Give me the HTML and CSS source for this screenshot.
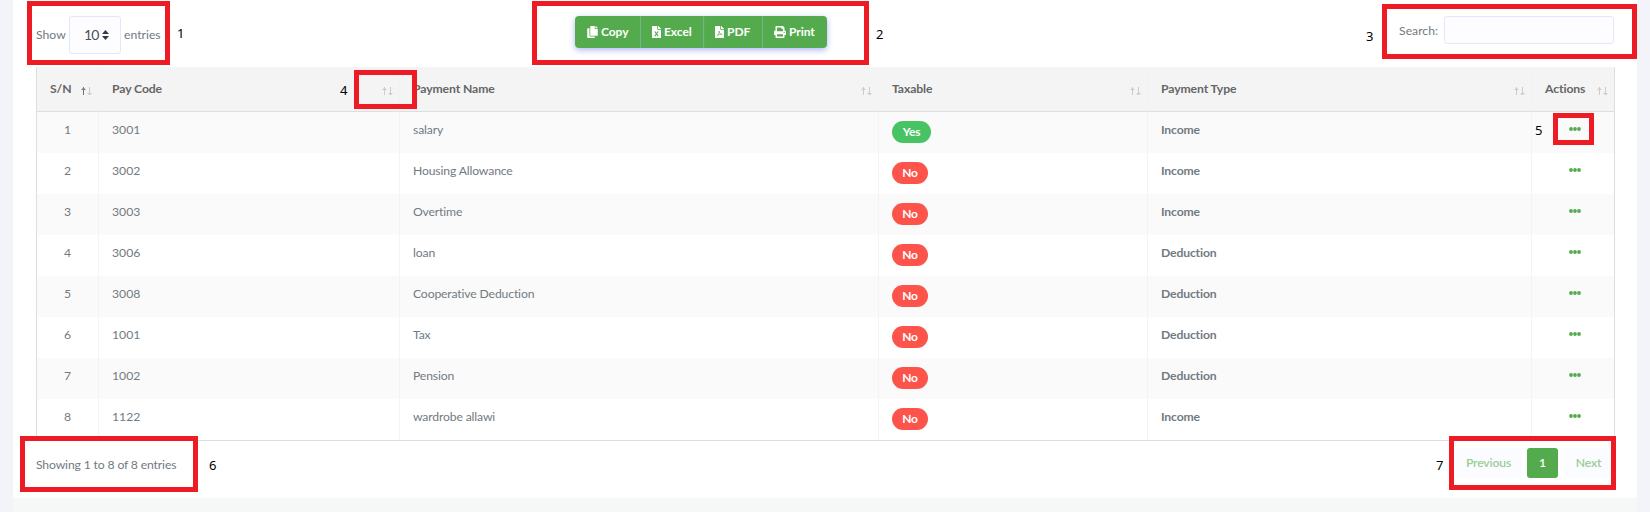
FILE: index.html
```html
<!DOCTYPE html>
<html lang="en">
<head>
<meta charset="utf-8">
<title>Payment codes</title>
<link rel="stylesheet" href="styles.css">
</head>
<body>
<svg width="0" height="0" class="defs">
  <symbol id="sort" viewBox="0 0 12 10"><path class="up" d="M2.500 9V1M.5 3.500h4M1.500 2.500h2" fill="none"/><path class="down" d="M8.500 1V9M6.500 7.500h4M7.500 8.500h2" fill="none"/></symbol>
  <symbol id="sort-asc" viewBox="0 0 12 10"><path d="M2.500 9V1M.5 3.500h4M1.500 2.500h2" fill="none" stroke="#777"/><path d="M8.500 1V9M6.500 7.500h4M7.500 8.500h2" fill="none"/></symbol>
  <symbol id="dots" viewBox="0 0 12 4"><circle cx="2" cy="2" r="1.900"/><circle cx="6" cy="2" r="1.900"/><circle cx="10" cy="2" r="1.900"/></symbol>
</svg>
<main class="card">
  <div class="toolbar">
    <label class="length"><span class="show">Show</span>
      <span class="select"><span class="num">10</span><svg width="7" height="10" viewBox="0 0 7 10"><path d="M0 4 3.500 0 7 4zM0 6h7L3.500 10z" fill="#343a40"/></svg></span>
      <span class="entries">entries</span></label>
    <div class="buttons">
      <button class="btn copy"><svg width="11" height="12" viewBox="0 0 448 512"><path d="M320 448v40c0 13.255-10.745 24-24 24H24c-13.255 0-24-10.745-24-24V120c0-13.255 10.745-24 24-24h72v296c0 30.879 25.121 56 56 56h168zm0-344V0H152c-13.255 0-24 10.745-24 24v368c0 13.255 10.745 24 24 24h272c13.255 0 24-10.745 24-24V128H344c-13.200 0-24-10.800-24-24zm120.971-31.029L375.029 7.029A24 24 0 0 0 358.059 0H352v96h96v-6.059a24 24 0 0 0-7.029-16.970z"/></svg><span>Copy</span></button>
      <button class="btn excel"><svg width="9" height="12" viewBox="0 0 384 512"><path d="M224 136V0H24C10.700 0 0 10.700 0 24v464c0 13.300 10.700 24 24 24h336c13.300 0 24-10.700 24-24V160H248c-13.200 0-24-10.800-24-24zM384 122v6H256V0h6c6.400 0 12.500 2.500 17 7l98 98c4.500 4.500 7 10.600 7 17z"/><path class="mark" d="M120 235 262 435M262 235 120 435"/></svg><span>Excel</span></button>
      <button class="btn pdf"><svg width="9" height="12" viewBox="0 0 384 512"><path d="M224 136V0H24C10.700 0 0 10.700 0 24v464c0 13.300 10.700 24 24 24h336c13.300 0 24-10.700 24-24V160H248c-13.200 0-24-10.800-24-24zM384 122v6H256V0h6c6.400 0 12.500 2.500 17 7l98 98c4.500 4.500 7 10.600 7 17z"/><path class="mark thin" d="M80 430c50-20 105-120 100-220-20 40 20 150 125 150-60-20-150 0-195 30"/></svg><span>PDF</span></button>
      <button class="btn print"><svg width="12" height="12" viewBox="0 0 512 512"><path d="M448 192V77.250c0-8.490-3.370-16.620-9.370-22.630L393.370 9.370c-6-6-14.140-9.370-22.630-9.370H96C78.330 0 64 14.330 64 32v160c-35.350 0-64 28.650-64 64v112c0 8.840 7.160 16 16 16h48v96c0 17.670 14.330 32 32 32h320c17.670 0 32-14.330 32-32v-96h48c8.840 0 16-7.160 16-16V256c0-35.350-28.650-64-64-64zm-64 256H128v-96h256v96zm0-224H128V64h192v48c0 8.840 7.160 16 16 16h48v96zm48 72c-13.250 0-24-10.750-24-24 0-13.260 10.750-24 24-24s24 10.740 24 24c0 13.250-10.750 24-24 24z"/></svg><span>Print</span></button>
    </div>
    <label class="search"><span>Search:</span><input type="text" aria-label="Search"></label>
  </div>
  <table class="grid">
    <colgroup><col class="c1"><col class="c2"><col class="c3"><col class="c4"><col class="c5"><col class="c6"></colgroup>
    <thead><tr>
      <th><div class="head"><span>S/N</span><svg class="sort"><use href="#sort-asc"/></svg></div></th>
      <th><div class="head"><span>Pay Code</span><svg class="sort"><use href="#sort"/></svg></div></th>
      <th><div class="head"><span>Payment Name</span><svg class="sort"><use href="#sort"/></svg></div></th>
      <th><div class="head"><span>Taxable</span><svg class="sort"><use href="#sort"/></svg></div></th>
      <th><div class="head"><span>Payment Type</span><svg class="sort"><use href="#sort"/></svg></div></th>
      <th><div class="head"><span>Actions</span><svg class="sort"><use href="#sort"/></svg></div></th>
    </tr></thead>
    <tbody>
      <tr><td>1</td><td>3001</td><td>salary</td><td><span class="badge yes">Yes</span></td><td>Income</td><td><svg class="dots"><use href="#dots"/></svg></td></tr>
      <tr><td>2</td><td>3002</td><td>Housing Allowance</td><td><span class="badge">No</span></td><td>Income</td><td><svg class="dots"><use href="#dots"/></svg></td></tr>
      <tr><td>3</td><td>3003</td><td>Overtime</td><td><span class="badge">No</span></td><td>Income</td><td><svg class="dots"><use href="#dots"/></svg></td></tr>
      <tr><td>4</td><td>3006</td><td>loan</td><td><span class="badge">No</span></td><td>Deduction</td><td><svg class="dots"><use href="#dots"/></svg></td></tr>
      <tr><td>5</td><td>3008</td><td>Cooperative Deduction</td><td><span class="badge">No</span></td><td>Deduction</td><td><svg class="dots"><use href="#dots"/></svg></td></tr>
      <tr><td>6</td><td>1001</td><td>Tax</td><td><span class="badge">No</span></td><td>Deduction</td><td><svg class="dots"><use href="#dots"/></svg></td></tr>
      <tr><td>7</td><td>1002</td><td>Pension</td><td><span class="badge">No</span></td><td>Deduction</td><td><svg class="dots"><use href="#dots"/></svg></td></tr>
      <tr><td>8</td><td>1122</td><td>wardrobe allawi</td><td><span class="badge">No</span></td><td>Income</td><td><svg class="dots"><use href="#dots"/></svg></td></tr>
    </tbody>
  </table>
  <div class="footer">
    <div class="info">Showing 1 to 8 of 8 entries</div>
    <nav class="pages"><a class="page prev">Previous</a><a class="page current">1</a><a class="page next">Next</a></nav>
  </div>
</main>
<div class="mark-box m1"></div><div class="mark-no n1">1</div>
<div class="mark-box m2"></div><div class="mark-no n2">2</div>
<div class="mark-box m3"></div><div class="mark-no n3">3</div>
<div class="mark-box m4"></div><div class="mark-no n4">4</div>
<div class="mark-box m5"></div><div class="mark-no n5">5</div>
<div class="mark-box m6"></div><div class="mark-no n6">6</div>
<div class="mark-box m7"></div><div class="mark-no n7">7</div>
</body>
</html>
```
FILE: styles.css
```css
* { box-sizing: border-box; }
body {
  margin: 0; width: 1650px; height: 512px; overflow: hidden; position: relative;
  padding: 0 13px; background: linear-gradient(#f6f8f8, #f6f8f8) 13px 498px / 1624px 14px no-repeat #f3f4f9;
  font: 12.200px/18px Lato, "Open Sans", sans-serif; letter-spacing: -.15px; color: #727a82;
}
.defs { position: absolute; }
.card { height: 498px; background: #fff; padding: 16px 23px 0 23px; }
.toolbar { display: grid; grid-template-columns: 539px 1fr auto; height: 51px; align-items: start; }
.length { display: flex; align-items: center; height: 38px; letter-spacing: 0; }
.show { width: 33px; }
.select { width: 52px; height: 38px; border: 1px solid #e4e6fc; border-radius: 3px; background: #fdfdff; display: flex; align-items: center; gap: 4px; padding-left: 14px; font-size: 14px; letter-spacing: -.9px; color: #495057; }
.num { width: 14px; }
.entries { margin-left: 3px; }
.buttons { display: flex; width: 252px; height: 32px; border-radius: 4px; box-shadow: 0 2px 6px #acb5f6; }
.btn { border: 0; margin: 0; padding: 0 0 0 12px; height: 32px; background: #54ab4d; color: #fff; display: flex; align-items: center; gap: 3px; font: 700 12px/18px Lato, sans-serif; letter-spacing: -.05px; box-shadow: inset 1px 0 1px #77b58c; }
.btn svg { fill: #fff; flex: none; }
.btn .mark { fill: none; stroke: #54ab4d; stroke-width: 48; }
.btn .mark.thin { stroke-width: 28; }
.copy { width: 65px; border-radius: 4px 0 0 4px; box-shadow: none; }
.excel { width: 63px; }
.pdf { width: 59px; }
.print { width: 65px; border-radius: 0 4px 4px 0; }
.search { display: flex; align-items: center; height: 28px; gap: 6px; letter-spacing: 0; }
.search span { padding-top: 2px; }
.search input { width: 170px; height: 28px; border: 1px solid #e4e6fc; border-radius: 3px; background: #fdfdff; padding: 0 8px; }
.grid { width: 1579px; height: 374px; table-layout: fixed; border-collapse: separate; border-spacing: 0; border-left: 1px solid #dcdee2; border-bottom: 1px solid #dcdee0; }
.c1 { width: 62px; } .c2 { width: 301px; } .c3 { width: 479px; } .c4 { width: 269px; } .c5 { width: 384px; } .c6 { width: 83px; }
th { height: 45px; padding: 0 6px 0 13px; background: #f4f4f4; border-right: 1px solid #f1f2f2; border-bottom: 1px solid #dcdee0; text-align: left; font-weight: 700; color: #666; }
.head { display: flex; justify-content: space-between; align-items: center; letter-spacing: -.1px; }
.sort { width: 12px; height: 10px; margin: 3px -1px 0 0; stroke: #ccc; stroke-width: 1; }
td { height: 41px; padding: 9px 13px 0; border-right: 1px solid #f3f4f4; vertical-align: top; }
tr > :last-child { border-right-color: #dcdee2; }
tbody tr:nth-child(odd) { background: #fafafa; }
td:first-child, td:last-child { text-align: center; }
td:nth-child(-n+2) { letter-spacing: 0; }
td:nth-child(5) { font-weight: 700; }
.badge { display: block; width: 36px; height: 22px; border-radius: 11px; background: #fc544b; color: #fff; font: 700 12px/21px Lato, sans-serif; text-align: center; }
.badge.yes { width: 39px; background: #47c363; }
.dots { width: 12px; height: 4px; fill: #54ab4d; display: block; margin: 6px 20px 0 auto; }
.footer { display: flex; justify-content: space-between; padding-top: 7px; }
.info { padding-top: 8px; }
.pages { display: flex; gap: 5px; }
.page { height: 30px; border-radius: 3px; background: #fbfcff; color: #98cd94; line-height: 30px; text-align: center; font-weight: 600; }
.prev { width: 67px; }
.current { width: 31px; background: #54ab4d; color: #fff; }
.next { width: 51px; }
.mark-box { position: absolute; border: 5px solid #ed1c24; }
.m1 { left: 27px; top: 1px; width: 143px; height: 64px; }
.m2 { left: 532px; top: 1px; width: 337px; height: 64px; }
.m3 { left: 1382px; top: 4px; width: 255px; height: 55px; }
.m4 { left: 354px; top: 70px; width: 63px; height: 39px; }
.m5 { left: 1553px; top: 113px; width: 41px; height: 32px; }
.m6 { left: 20px; top: 436px; width: 178px; height: 56px; }
.m7 { left: 1449px; top: 436px; width: 167px; height: 54px; }
.mark-no { position: absolute; font: 13px/18px "Noto Sans", sans-serif; color: #000; }
.n1 { left: 177px; top: 24px; }
.n2 { left: 876px; top: 25px; }
.n3 { left: 1366px; top: 27px; }
.n4 { left: 340px; top: 81px; }
.n5 { left: 1535px; top: 121px; }
.n6 { left: 209px; top: 456px; }
.n7 { left: 1436px; top: 456px; }
```
